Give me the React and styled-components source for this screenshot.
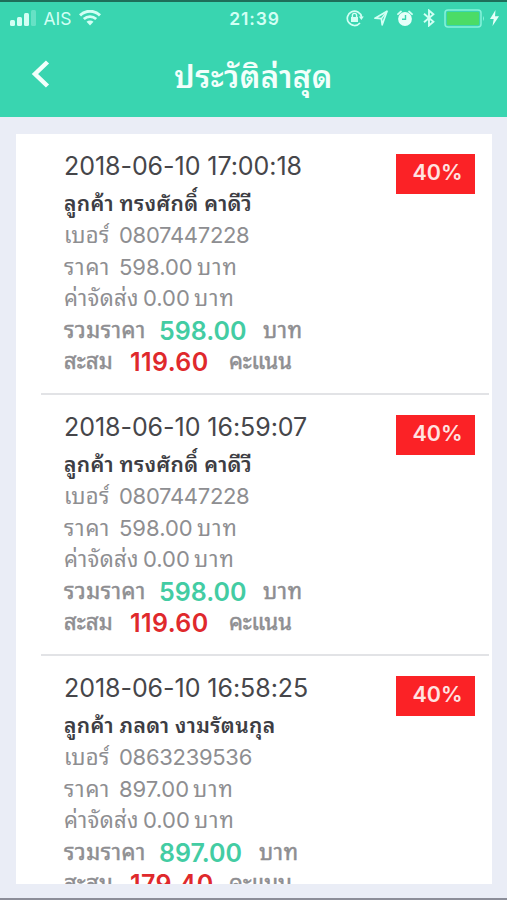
import React from "react"
import styled, { createGlobalStyle } from "styled-components"

const GlobalStyle = createGlobalStyle`
  * {
    box-sizing: border-box;
  }

  body {
    margin: 0;
    background: #eaedf6;
    font-family: Inter, Thonburi, "Noto Sans Thai Looped", Loma, Garuda, Waree, "Noto Sans Thai", sans-serif;
  }
`

const Screen = styled.div`
  display: flex;
  flex-direction: column;
  height: 900px;
  overflow: hidden;
  background: #eaedf6;
  border-top: 2px solid #1e6f5a;
  border-bottom: 2px solid #8c8e99;
`

const Header = styled.header`
  flex: none;
  height: 115px;
  background: #39d5b0;
  color: #f2fffb;
`

const StatusBar = styled.div`
  display: grid;
  grid-template-columns: 1fr auto 1fr;
  align-items: center;
  height: 32px;
  padding: 0 8px 0 10px;
  font-size: 17.5px;
  color: #d2fff4;

  svg {
    display: block;
  }
`

const StatusGroup = styled.div`
  display: flex;
  align-items: center;
  justify-content: ${(props) => (props.$end ? "flex-end" : "flex-start")};
  gap: ${(props) => props.$gap}px;
`

const Power = styled.div`
  display: flex;
  align-items: center;
  gap: 4px;
`

const Clock = styled.span`
  font-size: 17.5px;
  font-weight: 600;
  letter-spacing: 0.9px;
`

const NavBar = styled.div`
  display: grid;
  grid-template-columns: 60px 1fr 60px;
  align-items: center;
  height: 83px;
`

const BackButton = styled.button`
  display: flex;
  padding: 0 0 4px 31px;
  border: 0;
  background: none;
  color: inherit;
`

const Title = styled.h1`
  margin: 0;
  padding-top: 2px;
  text-align: center;
  font-size: 31px;
  line-height: 40px;
  font-weight: 600;
  letter-spacing: 0.4px;
  white-space: nowrap;
`

const List = styled.main`
  flex: none;
  height: 750px;
  margin: 17px 15px 0 16px;
  overflow: hidden;
  background: #fff;
`

const Item = styled.article`
  display: flex;
  justify-content: space-between;
  height: 261px;
  margin: 0 3px 0 25px;
  padding: 12px 13px 0 23px;
  border-bottom: 2px solid #e2e3e6;
`

const Details = styled.div`
  color: #8e8e91;
  font-size: 22px;
`

const DateText = styled.div`
  height: 41px;
  line-height: 40px;
  font-size: 25px;
  letter-spacing: -0.05px;
  white-space: nowrap;
  color: #46464a;
`

const Name = styled.div`
  height: 32px;
  line-height: 34px;
  font-size: 21px;
  font-weight: 600;
  letter-spacing: 0.35px;
  white-space: nowrap;
  color: #3d3d43;
`

const Row = styled.div`
  display: flex;
  height: 31.6px;
  line-height: 33px;
  white-space: nowrap;
  -webkit-text-stroke: ${(props) => (props.$strong ? "0.5px currentColor" : "0")};
`

const Cell = styled.span`
  flex: none;
  width: ${(props) => (props.$w ? `${props.$w}px` : "auto")};
  letter-spacing: ${(props) => props.$track || 0}px;
`

const Amount = styled(Cell)`
  font-size: 25px;
  line-height: 35px;
  font-weight: 600;
  color: ${(props) => props.$color};
  -webkit-text-stroke: 0;
`

const Badge = styled.div`
  width: 79px;
  height: 40px;
  margin: 8px 1px 0 0;
  padding-left: 4px;
  background: #fb2226;
  color: #ffe3e1;
  text-align: center;
  font-size: 21.5px;
  line-height: 36px;
  font-weight: 600;
`

const orders = [
  {
    date: "2018-06-10 17:00:18",
    name: "ลูกค้า ทรงศักดิ์ คาดีวี",
    phone: "0807447228",
    price: "598.00",
    points: "119.60",
    gap: 104,
  },
  {
    date: "2018-06-10 16:59:07",
    name: "ลูกค้า ทรงศักดิ์ คาดีวี",
    phone: "0807447228",
    price: "598.00",
    points: "119.60",
    gap: 104,
  },
  {
    date: "2018-06-10 16:58:25",
    name: "ลูกค้า ภลดา งามรัตนกุล",
    phone: "0863239536",
    price: "897.00",
    points: "179.40",
    gap: 100,
  },
]

const Signal = () => (
  <svg width="26" height="17" viewBox="0 0 26 17" fill="currentColor">
    <rect x="0" y="10" width="5" height="6" rx="1.5" />
    <rect x="7" y="7" width="5" height="9" rx="1.5" />
    <rect x="14" y="3" width="5" height="13" rx="1.5" />
    <rect x="21" y="0" width="5" height="16" rx="1.5" opacity="0.3" />
  </svg>
)

const Wifi = () => (
  <svg width="22" height="16" viewBox="0 0 22 16" fill="none" stroke="currentColor">
    <path d="M1 5.3C6.7-.1 15.3-.1 21 5.3" strokeWidth="3" />
    <path d="M4.8 9C8.4 5.7 13.6 5.7 17.2 9" strokeWidth="2.8" />
    <path d="M7.5 11.8C9.5 10 12.5 10 14.5 11.8L11 15.5Z" fill="currentColor" stroke="none" />
  </svg>
)

const RotationLock = () => (
  <svg width="18" height="18" viewBox="0 0 18 18" fill="none" stroke="currentColor">
    <path d="M14 14A7.2 7.2 0 1 1 15.6 8" strokeWidth="1.7" />
    <path d="M12.8 7.5h5L15.4 11z" fill="currentColor" stroke="none" />
    <rect x="5" y="8" width="7" height="5" fill="currentColor" stroke="none" />
    <path d="M6.4 8V6.5a2.1 2.1 0 0 1 4.2 0V8" strokeWidth="1.4" />
  </svg>
)

const Location = () => (
  <svg width="14" height="16" viewBox="0 0 14 16" fill="none" stroke="currentColor">
    <path d="M13 1.2 1 8.2l6.4.4.8 6.2z" strokeWidth="1.7" strokeLinejoin="round" />
    <path d="M13 1.2 7.4 8.6" strokeWidth="1.5" />
  </svg>
)

const Alarm = () => (
  <svg width="16" height="17" viewBox="0 0 16 17" fill="none">
    <circle cx="8" cy="9" r="6.9" fill="#e6fff9" />
    <path d="M1 4.2 4 1.5M15 4.2 12 1.5" stroke="currentColor" strokeWidth="1.8" strokeLinecap="round" />
    <path d="M8.5 5v4.3H5" stroke="#39d5b0" strokeWidth="1.4" />
  </svg>
)

const Bluetooth = () => (
  <svg width="12" height="18" viewBox="0 0 12 18" fill="none" stroke="currentColor" strokeWidth="1.9">
    <path d="M1 4.8 10.4 12.8 6 16.5V1.5L10.4 5.2 1 13.2" />
  </svg>
)

const Battery = () => (
  <svg width="42" height="19" viewBox="0 0 42 19" fill="none">
    <rect x="1" y="1" width="36" height="17" rx="3" stroke="#86f2da" strokeWidth="1.5" />
    <rect x="3" y="3" width="32" height="13" rx="1" fill="#4bdc66" />
    <path d="M39 7q2 2.5 0 5z" fill="#86f2da" />
  </svg>
)

const Bolt = () => (
  <svg width="9" height="16" viewBox="0 0 9 16" fill="#e6fff9">
    <path d="M5.5 0 0 9h3.7L2.5 16 9 6.3H5z" />
  </svg>
)

const Order = ({ date, name, phone, price, points, gap }) => (
  <Item>
    <Details>
      <DateText>{date}</DateText>
      <Name>{name}</Name>
      <Row>
        <Cell $w={55} $track={0.3}>เบอร์</Cell>
        <Cell $track={-0.3}>{phone}</Cell>
      </Row>
      <Row>
        <Cell $w={55} $track={0.9}>ราคา</Cell>
        <Cell $w={gap === 104 ? 78 : 74}>{price}</Cell>
        <Cell $track={1}>บาท</Cell>
      </Row>
      <Row>
        <Cell $w={79} $track={0.3}>ค่าจัดส่ง</Cell>
        <Cell $w={51}>0.00</Cell>
        <Cell $track={1}>บาท</Cell>
      </Row>
      <Row $strong>
        <Cell $w={95} $track={0.6}>รวมราคา</Cell>
        <Amount $w={gap} $color="#43cca3">
          {price}
        </Amount>
        <Cell $track={0.6}>บาท</Cell>
      </Row>
      <Row $strong>
        <Cell $w={66} $track={0.2}>สะสม</Cell>
        <Amount $w={99} $color="#df292c" $track={0.4}>
          {points}
        </Amount>
        <Cell $track={-0.1}>คะแนน</Cell>
      </Row>
    </Details>
    <Badge>40%</Badge>
  </Item>
)

const App = () => {
  return (
    <>
      <GlobalStyle />
      <Screen>
        <Header>
          <StatusBar>
            <StatusGroup $gap={7.5}>
              <Signal />
              <span>AIS</span>
              <Wifi />
            </StatusGroup>
            <Clock>21:39</Clock>
            <StatusGroup $gap={9.5} $end>
              <RotationLock />
              <Location />
              <Alarm />
              <Bluetooth />
              <Power>
                <Battery />
                <Bolt />
              </Power>
            </StatusGroup>
          </StatusBar>
          <NavBar>
            <BackButton aria-label="Back">
              <svg width="19" height="28" viewBox="0 0 19 28" fill="none" stroke="currentColor" strokeWidth="4.5">
                <path d="M16.5 2 4 14l12.5 12" />
              </svg>
            </BackButton>
            <Title>ประวัติล่าสุด</Title>
          </NavBar>
        </Header>
        <List>
          {orders.map((order) => (
            <Order key={order.date} {...order} />
          ))}
        </List>
      </Screen>
    </>
  )
}

export default App
